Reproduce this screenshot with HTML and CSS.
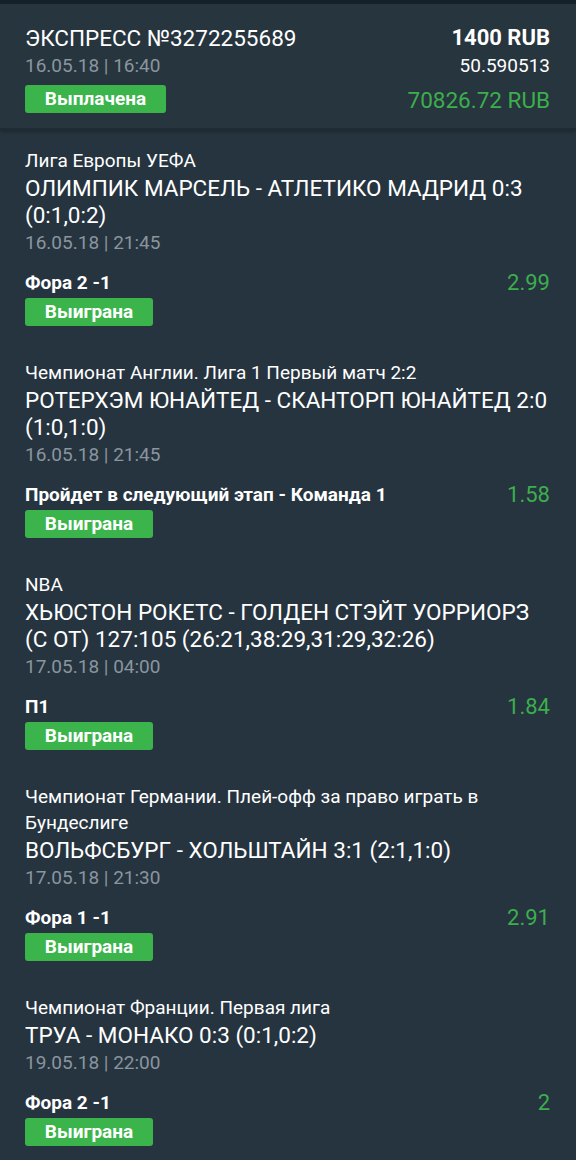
FILE: index.html
```html
<!DOCTYPE html>
<html lang="ru">
<head>
  <meta charset="UTF-8">
  <meta name="viewport" content="width=device-width, initial-scale=1.0">
  <title>Экспресс</title>
  <link rel="stylesheet" href="styles.css">
</head>
<body>

  <!-- Bet summary -->
  <header class="summary">
    <div class="summary-left">
      <h1 class="summary-title">ЭКСПРЕСС №3272255689</h1>
      <p class="muted">16.05.18 | 16:40</p>
      <span class="badge badge-wide">Выплачена</span>
    </div>
    <div class="summary-right">
      <p class="stake">1400 RUB</p>
      <p class="coef">50.590513</p>
      <p class="payout">70826.72 RUB</p>
    </div>
  </header>

  <!-- Events -->
  <main class="events">
    <section class="event">
      <p class="league">Лига Европы УЕФА</p>
      <p class="match">ОЛИМПИК МАРСЕЛЬ - АТЛЕТИКО МАДРИД 0:3 (0:1,0:2)</p>
      <p class="muted">16.05.18 | 21:45</p>
      <div class="bet">
        <span class="bet-name">Фора 2 -1</span>
        <span class="odds">2.99</span>
      </div>
      <span class="badge">Выиграна</span>
    </section>

    <section class="event">
      <p class="league">Чемпионат Англии. Лига 1 Первый матч 2:2</p>
      <p class="match">РОТЕРХЭМ ЮНАЙТЕД - СКАНТОРП ЮНАЙТЕД 2:0 (1:0,1:0)</p>
      <p class="muted">16.05.18 | 21:45</p>
      <div class="bet">
        <span class="bet-name">Пройдет в следующий этап - Команда 1</span>
        <span class="odds">1.58</span>
      </div>
      <span class="badge">Выиграна</span>
    </section>

    <section class="event">
      <p class="league">NBA</p>
      <p class="match">ХЬЮСТОН РОКЕТС - ГОЛДЕН СТЭЙТ УОРРИОРЗ (С ОТ) 127:105 (26:21,38:29,31:29,32:26)</p>
      <p class="muted">17.05.18 | 04:00</p>
      <div class="bet">
        <span class="bet-name">П1</span>
        <span class="odds">1.84</span>
      </div>
      <span class="badge">Выиграна</span>
    </section>

    <section class="event">
      <p class="league">Чемпионат Германии. Плей-офф за право играть в Бундеслиге</p>
      <p class="match">ВОЛЬФСБУРГ - ХОЛЬШТАЙН 3:1 (2:1,1:0)</p>
      <p class="muted">17.05.18 | 21:30</p>
      <div class="bet">
        <span class="bet-name">Фора 1 -1</span>
        <span class="odds">2.91</span>
      </div>
      <span class="badge">Выиграна</span>
    </section>

    <section class="event">
      <p class="league">Чемпионат Франции. Первая лига</p>
      <p class="match">ТРУА - МОНАКО 0:3 (0:1,0:2)</p>
      <p class="muted">19.05.18 | 22:00</p>
      <div class="bet">
        <span class="bet-name">Фора 2 -1</span>
        <span class="odds">2</span>
      </div>
      <span class="badge">Выиграна</span>
    </section>
  </main>

  <footer class="bottom-bar"></footer>

</body>
</html>
```

FILE: styles.css
```css
* {
  box-sizing: border-box;
  margin: 0;
  padding: 0;
}

html, body {
  height: 100%;
}

body {
  font-family: Roboto, "Noto Sans", Arial, sans-serif;
  background-color: #263440;
  color: #fff;
  display: flex;
  flex-direction: column;
  border-top: 4px solid #14212a;
}

p {
  font-size: 19px;
  line-height: 26px;
}

.muted {
  color: #8a959e;
  line-height: 27px;
}

/* Summary header */
.summary {
  display: flex;
  justify-content: space-between;
  padding: 20px 26px 14px 25px;
  background-color: #27353f;
  border-bottom: 2px solid #1e2b35;
  box-shadow: 0 2px 3px rgba(0, 0, 0, 0.25);
}

.summary-title {
  font-size: 22.5px;
  font-weight: normal;
  line-height: 28px;
}

.summary-right {
  text-align: right;
}

.stake {
  font-size: 22px;
  font-weight: bold;
  line-height: 28px;
}

.coef {
  font-size: 19px;
  line-height: 28px;
}

.payout {
  color: #3cae4c;
  font-size: 22.5px;
  line-height: 28px;
  margin-top: 6px;
}

/* Status badge */
.badge {
  display: inline-block;
  background-color: #3bb54b;
  color: #fff;
  font-size: 19px;
  font-weight: bold;
  line-height: 28px;
  height: 28px;
  width: 128px;
  text-align: center;
  border-radius: 3px;
}

.badge-wide {
  width: 141px;
  margin-top: 6px;
}

/* Events list */
.events {
  flex: 1;
  padding: 18px 26px 0 25px;
}

.event {
  padding-bottom: 34px;
}

.match {
  font-size: 22.5px;
  line-height: 27px;
  padding-top: 1px;
}

.bet {
  display: flex;
  justify-content: space-between;
  align-items: center;
  margin-top: 14px;
  margin-bottom: 2px;
  line-height: 26px;
}

.bet-name {
  font-size: 19px;
  font-weight: bold;
}

.odds {
  color: #3cae4c;
  font-size: 22px;
}

.bottom-bar {
  height: 4px;
  background-color: #16232c;
}
```
